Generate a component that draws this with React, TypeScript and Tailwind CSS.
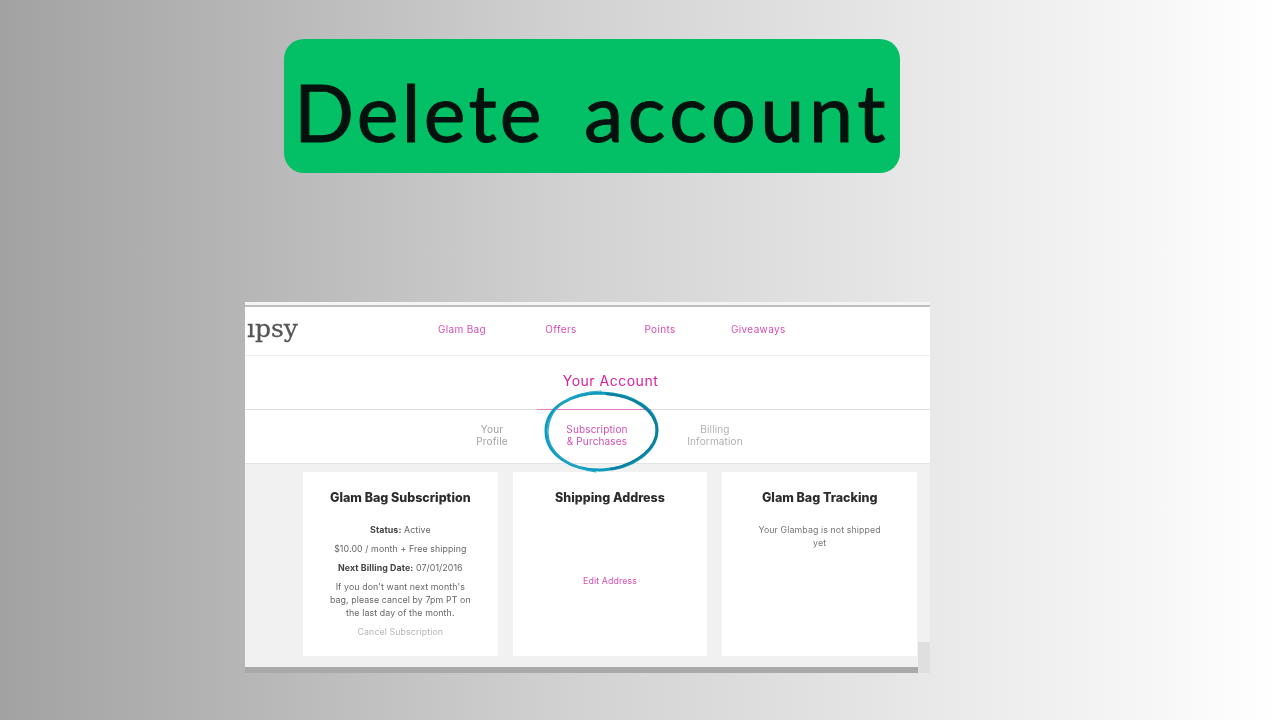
const bodyFont = "font-['Inter','Liberation_Sans',sans-serif]";

const navItems = [
  { label: "Glam Bag", className: "w-[50px] ml-[192px]" },
  { label: "Offers", className: "w-[32px] ml-[58px]" },
  { label: "Points", className: "w-[32px] ml-[67px]" },
  { label: "Giveaways", className: "w-[54px] ml-[55px]" },
];

const Card = ({ title, children }: { title: string; children?: React.ReactNode }) => (
  <div className="bg-white h-[184px] flex flex-col items-center pt-[18px] text-center">
    <h3 className="text-[12.5px] leading-[16px] font-extrabold text-[#2c2c2c] whitespace-nowrap">{title}</h3>
    {children}
  </div>
);

const App = () => {
  return (
    <div className={`w-[1280px] h-[720px] overflow-hidden bg-gradient-to-r from-[#a2a2a2] via-[#d2d2d2] via-45% to-white ${bodyFont}`}>
      <div className="pt-[39px] pl-[284px]">
        <div className="w-[616px] h-[134px] rounded-[20px] bg-[#03bf65] flex items-center justify-center pt-[11px] font-['Lato',sans-serif] text-[79px] leading-none whitespace-pre text-[#03120e] [-webkit-text-stroke:1px_#03120e]">
          <span className="tracking-[3.3px]">Delete</span>
          <span className="ml-[39px] tracking-[4.6px]">account</span>
        </div>
      </div>

      <div className="relative ml-[245px] mt-[129px] w-[685px] h-[371px] bg-[#f2f2f2] flex flex-col blur-[0.4px]">
        <div className="h-[5px] bg-[#f4f4f4] border-b-2 border-[#bdbdbd]" />
        <div className="h-[49px] bg-white border-b border-[#efefef] flex items-center relative">
          <span className="absolute left-[2px] top-[7px] font-['DejaVu_Serif',serif] text-[25px] leading-[30px] text-[#555] [-webkit-text-stroke:0.3px_#555]">ıpsy</span>
          {navItems.map((item) => (
            <span key={item.label} className={`${item.className} mb-[3px] text-[10px] tracking-[0.35px] whitespace-nowrap text-center text-[#d44fb4]`}>{item.label}</span>
          ))}
        </div>
        <div className="h-[54px] bg-white border-b border-[#dedede] flex items-center justify-center relative">
          <span className="text-[14px] tracking-[0.5px] font-normal text-[#d81fa0] ml-[46px] mb-[5px]">Your Account</span>
          <div className="absolute z-10 left-[292px] -bottom-px w-[114px] h-px bg-[#ec78ca]" />
        </div>
        <div className="h-[54px] bg-white border-b border-[#e3e3e3] flex items-center text-[10px] leading-[11.5px] text-center tracking-[0.15px] pb-[2px]">
          <span className="ml-[230px] w-[34px] text-[#a3a3a3]">Your<br />Profile</span>
          <span className="ml-[53px] w-[70px] text-[#d44fb4]">Subscription<br />&amp; Purchases</span>
          <span className="ml-[53px] w-[60px] text-[#b0b0b0]">Billing<br />Information</span>
        </div>
        <div className="flex-1 pt-[8px] pl-[58px] pr-[13px] bg-[#f1f1f1]">
          <div className="grid grid-cols-3 gap-x-[15px] w-[614px]">
            <Card title="Glam Bag Subscription">
              <div className="mt-[17px] text-[8.8px] leading-[13px] tracking-[0.1px] text-[#666] flex flex-col items-center">
                <p className="mb-[6px]"><b className="text-[#444]">Status:</b> Active</p>
                <p className="mb-[6px] whitespace-nowrap">$10.00 / month + Free shipping</p>
                <p className="mb-[6px] whitespace-nowrap"><b className="text-[#444]">Next Billing Date:</b> 07/01/2016</p>
                <p className="w-[145px]">If you don't want next month's<br />bag, please cancel by 7pm PT on<br />the last day of the month.</p>
                <p className="mt-[6px] text-[#b5b5b5]">Cancel Subscription</p>
              </div>
            </Card>
            <Card title="Shipping Address">
              <p className="mt-[68px] text-[8.8px] leading-[13px] tracking-[0.1px] text-[#d44fb4]">Edit Address</p>
            </Card>
            <Card title="Glam Bag Tracking">
              <p className="mt-[17px] w-[130px] text-[8.8px] leading-[13px] tracking-[0.1px] text-[#777]">Your Glambag is not shipped yet</p>
            </Card>
          </div>
        </div>
        <div className="absolute right-0 bottom-0 w-[12px] h-[31px] bg-[#dfdfdf]" />
        <div className="h-[6px] mr-[12px] bg-[#a9a9a9]" />
        <svg className="absolute z-20 left-[296px] top-[85px]" width="120" height="90" viewBox="0 0 120 90" fill="none">
          <path d="M60 6C30 6 5 20 5 44c0 24 26 40 56 39 30-1 55-19 55-40C116 22 92 7 60 6" stroke="#0d9bbd" strokeWidth="3" strokeLinecap="round" />
          <path d="M66 7c28 2 49 17 50 36 0 18-20 34-46 39" stroke="#0f7f9f" strokeWidth="2.6" strokeLinecap="round" />
          <path d="M60 4C28 5 7 21 7 46c0 20 22 35 48 39" stroke="#29a8c8" strokeWidth="1.2" strokeLinecap="round" />
        </svg>
      </div>
    </div>
  );
};

export default App;
